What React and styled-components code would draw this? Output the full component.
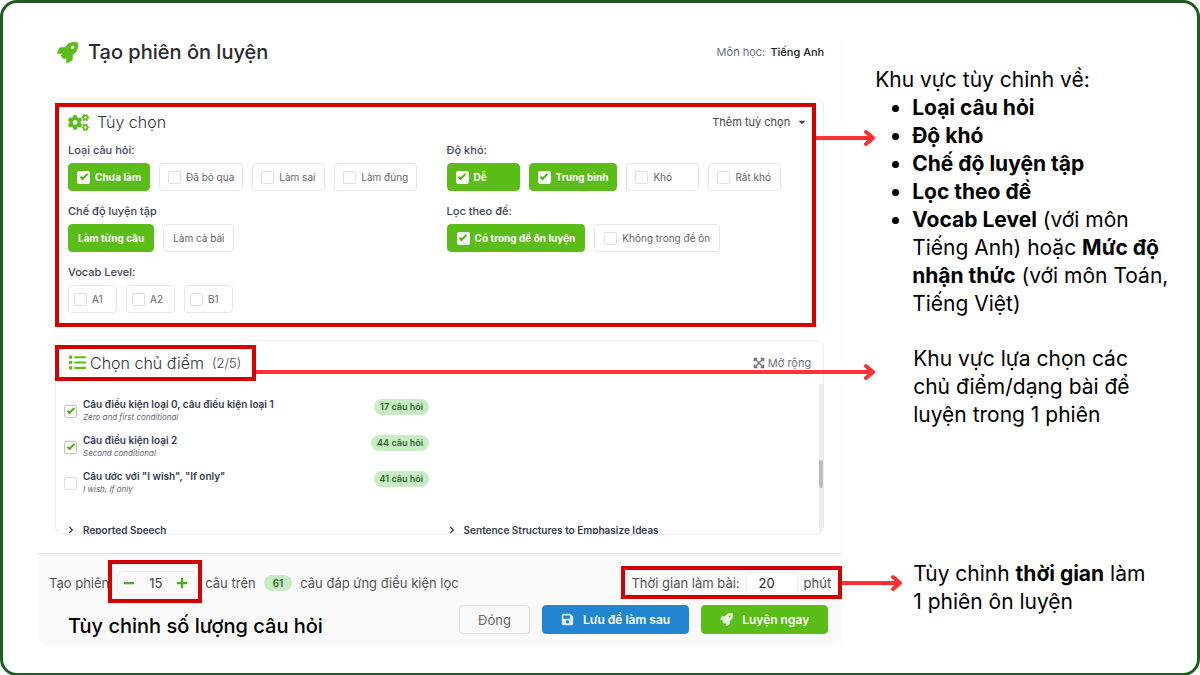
import React, { useState } from 'react';
import styled, { createGlobalStyle } from 'styled-components';
import {
  FaRocket,
  FaCogs,
  FaList,
  FaExpandArrowsAlt,
  FaSave,
  FaPlus,
  FaMinus,
  FaCaretDown,
  FaChevronRight,
} from 'react-icons/fa';

const QUESTION_TYPES = [
  { label: 'Chưa làm', on: true },
  { label: 'Đã bỏ qua' },
  { label: 'Làm sai' },
  { label: 'Làm đúng' },
];
const DIFFICULTIES = [
  { label: 'Dễ', on: true },
  { label: 'Trung bình', on: true },
  { label: 'Khó' },
  { label: 'Rất khó' },
];
const EXAM_FILTERS = [
  { label: 'Có trong đề ôn luyện', on: true },
  { label: 'Không trong đề ôn' },
];
const VOCAB_LEVELS = [{ label: 'A1' }, { label: 'A2' }, { label: 'B1' }];
const MODES = ['Làm từng câu', 'Làm cả bài'];

const TOPICS = [
  {
    title: 'Câu điều kiện loại 0, câu điều kiện loại 1',
    sub: 'Zero and first conditional',
    count: 17,
    on: true,
  },
  {
    title: 'Câu điều kiện loại 2',
    sub: 'Second conditional',
    count: 44,
    on: true,
  },
  {
    title: 'Câu ước với "I wish", "If only"',
    sub: 'I wish, If only',
    count: 41,
  },
];

function CheckChip({ label, on, size }) {
  const [checked, setChecked] = useState(!!on);
  return (
    <Chip $on={checked} $size={size}>
      <CheckBox
        type="checkbox"
        checked={checked}
        onChange={() => setChecked(!checked)}
      />
      <span>{label}</span>
    </Chip>
  );
}

function CheckGroup({ title, items, size }) {
  return (
    <Group>
      <legend>{title}</legend>
      <ChipRow>
        {items.map((item) => (
          <CheckChip key={item.label} size={size} {...item} />
        ))}
      </ChipRow>
    </Group>
  );
}

function Topic({ title, sub, count, on }) {
  const [checked, setChecked] = useState(!!on);
  return (
    <TopicRow>
      <CheckBox
        type="checkbox"
        $outlined
        checked={checked}
        onChange={() => setChecked(!checked)}
      />
      <TopicText>
        <strong>{title}</strong>
        <em>{sub}</em>
      </TopicText>
      <TopicBadge>{count} câu hỏi</TopicBadge>
    </TopicRow>
  );
}

function Arrow({ as: Place }) {
  return (
    <Place aria-hidden="true">
      <ArrowLine />
      <ArrowHead viewBox="0 0 12 18">
        <path d="M3 3 L10 9 L3 15" />
      </ArrowHead>
    </Place>
  );
}

export default function App() {
  const [mode, setMode] = useState(MODES[0]);
  const [amount, setAmount] = useState(15);
  const [minutes, setMinutes] = useState(20);

  return (
    <>
      <GlobalStyle />
      <Frame>
        <Modal>
          <ModalHeader>
            <FaRocket />
            <h1>Tạo phiên ôn luyện</h1>
            <Subject>
              Môn học: <b>Tiếng Anh</b>
            </Subject>
          </ModalHeader>

          <OptionCard>
            <CardHead>
              <FaCogs size={21} />
              <CardTitle $gap="8px">Tùy chọn</CardTitle>
              <MoreButton type="button">
                Thêm tuỳ chọn <FaCaretDown size={10} />
              </MoreButton>
            </CardHead>
            <OptionGrid>
              <CheckGroup title="Loại câu hỏi:" items={QUESTION_TYPES} />
              <CheckGroup title="Độ khó:" items={DIFFICULTIES} />
              <Group>
                <legend>Chế độ luyện tập</legend>
                <ChipRow>
                  {MODES.map((name) => (
                    <ModeButton
                      key={name}
                      type="button"
                      $on={mode === name}
                      onClick={() => setMode(name)}
                    >
                      {name}
                    </ModeButton>
                  ))}
                </ChipRow>
              </Group>
              <CheckGroup
                title="Lọc theo đề:"
                items={EXAM_FILTERS}
                size="wide"
              />
              <CheckGroup
                title="Vocab Level:"
                items={VOCAB_LEVELS}
                size="small"
              />
            </OptionGrid>
            <OptionMark />
            <Arrow as={OptionArrow} />
          </OptionCard>

          <TopicCard>
            <TopicHead>
              <FaList size={17} />
              <CardTitle $gap="4px">Chọn chủ điểm</CardTitle>
              <TopicCount>(2/5)</TopicCount>
              <ExpandButton type="button">
                <FaExpandArrowsAlt size={12} /> Mở rộng
              </ExpandButton>
            </TopicHead>
            <TopicBody>
              {TOPICS.map((topic) => (
                <Topic key={topic.title} {...topic} />
              ))}
              <SectionRow>
                <SectionButton type="button">
                  <FaChevronRight size={8} /> Reported Speech
                </SectionButton>
                <SectionButton type="button">
                  <FaChevronRight size={8} /> Sentence Structures to Emphasize
                  Ideas
                </SectionButton>
              </SectionRow>
              <ScrollTrack>
                <ScrollThumb />
              </ScrollTrack>
            </TopicBody>
            <TopicMark />
            <Arrow as={TopicArrow} />
          </TopicCard>

          <Footer>
            <FooterRow>
              <span>Tạo phiên</span>
              <Stepper>
                <button
                  type="button"
                  aria-label="Giảm"
                  onClick={() => setAmount(amount - 1)}
                >
                  <FaMinus size={12} />
                </button>
                <input
                  aria-label="Số câu"
                  value={amount}
                  onChange={(e) => setAmount(Number(e.target.value) || 0)}
                />
                <button
                  type="button"
                  aria-label="Tăng"
                  onClick={() => setAmount(amount + 1)}
                >
                  <FaPlus size={12} />
                </button>
                <StepperMark />
              </Stepper>
              <span>câu trên</span>
              <Badge $wide>61</Badge>
              <span>câu đáp ứng điều kiện lọc</span>
              <TimeBox>
                <label htmlFor="minutes">Thời gian làm bài:</label>
                <input
                  id="minutes"
                  value={minutes}
                  onChange={(e) => setMinutes(e.target.value)}
                />
                <span>phút</span>
                <TimeMark />
                <Arrow as={TimeArrow} />
              </TimeBox>
            </FooterRow>
            <ActionRow>
              <Caption>Tùy chỉnh số lượng câu hỏi</Caption>
              <ActionButton type="button">Đóng</ActionButton>
              <ActionButton type="button" $color="#2185d0">
                <FaSave size={13} /> Lưu để làm sau
              </ActionButton>
              <ActionButton type="button" $color="#5bbd17">
                <FaRocket size={13} /> Luyện ngay
              </ActionButton>
            </ActionRow>
          </Footer>
        </Modal>

        <Notes>
          <NoteIntro>
            <p>Khu vực tùy chỉnh về:</p>
            <ul>
              <li>
                <b>Loại câu hỏi</b>
              </li>
              <li>
                <b>Độ khó</b>
              </li>
              <li>
                <b>Chế độ luyện tập</b>
              </li>
              <li>
                <b>Lọc theo đề</b>
              </li>
              <li>
                <b>Vocab Level</b> (với môn Tiếng Anh) hoặc{' '}
                <b>Mức độ nhận thức</b> (với môn Toán, Tiếng Việt)
              </li>
            </ul>
          </NoteIntro>
          <TopicNote>
            Khu vực lựa chọn các chủ điểm/dạng bài để luyện trong 1 phiên
          </TopicNote>
          <TimeNote>
            Tùy chỉnh <b>thời gian</b> làm
            <br />1 phiên ôn luyện
          </TimeNote>
        </Notes>
      </Frame>
    </>
  );
}

const GlobalStyle = createGlobalStyle`
  * {
    box-sizing: border-box;
  }
  body {
    margin: 0;
    background: #ffffff;
    color: #000000;
    font-family: Inter, 'Noto Sans', sans-serif;
  }
  h1, h2, p, ul, fieldset {
    margin: 0;
    padding: 0;
    border: none;
  }
  button, input {
    font-family: inherit;
  }
  button {
    cursor: pointer;
  }
`;

const Frame = styled.main`
  min-height: 100vh;
  display: grid;
  grid-template-columns: 68fr 30fr;
  align-items: start;
  padding: 35px 0 27px 35px;
  border: 3px solid #1b5e20;
  border-radius: 17px;
`;

const Modal = styled.section`
  border-right: 1px solid #fafafa;
`;

const ModalHeader = styled.header`
  display: flex;
  align-items: center;
  height: 28px;
  margin: 0 17px 32px;
  padding-left: 2px;
  & > svg {
    width: 21px;
    height: 21px;
    color: #5bbd17;
  }
  & > h1 {
    margin-left: 10px;
    font-size: 20px;
    font-weight: 500;
    color: #2b2b2b;
  }
`;

const Subject = styled.span`
  margin-left: auto;
  font-size: 11px;
  color: #6b7280;
  & > b {
    margin-left: 2px;
    font-weight: 500;
    color: #222222;
  }
`;

const Card = styled.section`
  position: relative;
  margin: 0 17px;
  border: 1px solid #eeeeee;
  border-radius: 8px;
`;

const OptionCard = styled(Card)`
  padding: 13px 12px;
  margin-bottom: 13px;
`;

const CardHead = styled.div`
  display: flex;
  align-items: center;
  height: 20px;
  & > svg {
    color: #5bbd17;
  }
`;

const CardTitle = styled.h2`
  margin-left: ${(props) => props.$gap};
  font-size: 16px;
  font-weight: 300;
  color: #333333;
`;

const MoreButton = styled.button`
  display: flex;
  align-items: center;
  gap: 7px;
  margin-left: auto;
  padding: 0 4px 0 0;
  border: none;
  background: none;
  font-size: 11px;
  color: #444444;
`;

const OptionGrid = styled.div`
  display: grid;
  grid-template-columns: 1fr 1fr;
  gap: 12px 14px;
  margin-top: 10px;
`;

const Group = styled.fieldset`
  min-width: 0;
  & > legend {
    padding: 0;
    margin-bottom: 5px;
    font-size: 11px;
    line-height: 16px;
    font-weight: 500;
    color: #3f4657;
  }
`;

const ChipRow = styled.div`
  display: flex;
  gap: 9px;
`;

const CHIP_PADDING = { small: '5px', wide: '9px' };

const Chip = styled.label`
  display: flex;
  align-items: center;
  gap: 5px;
  height: 28px;
  min-width: ${(props) => (props.$size === 'small' ? '49px' : '73px')};
  padding: 0 ${(props) => CHIP_PADDING[props.$size] || '8px'};
  border: 1px solid ${(props) => (props.$on ? '#5bbd17' : '#e6e6e6')};
  border-radius: 4px;
  background-color: ${(props) => (props.$on ? '#5bbd17' : '#ffffff')};
  color: ${(props) => (props.$on ? '#ffffff' : '#666666')};
  font-size: 10px;
  font-weight: ${(props) => (props.$on ? 700 : 400)};
  white-space: nowrap;
  cursor: pointer;
`;

const CheckBox = styled.input`
  appearance: none;
  flex: none;
  display: grid;
  place-items: center;
  width: 13px;
  height: 13px;
  margin: 0;
  border: 1px solid #e0e0e0;
  border-radius: 2px;
  background: #ffffff;
  &:checked {
    border-color: ${(props) => (props.$outlined ? '#c4c4c4' : '#ffffff')};
  }
  &:checked::before {
    content: '';
    width: 6px;
    height: 2px;
    margin-bottom: 2px;
    border-left: 2px solid #4caf10;
    border-bottom: 2px solid #4caf10;
    transform: rotate(-45deg);
  }
`;

const ModeButton = styled.button`
  height: 28px;
  padding: 0 9px;
  border: 1px solid ${(props) => (props.$on ? '#5bbd17' : '#e6e6e6')};
  border-radius: 4px;
  background-color: ${(props) => (props.$on ? '#5bbd17' : '#ffffff')};
  color: ${(props) => (props.$on ? '#ffffff' : '#666666')};
  font-size: 10px;
  font-weight: ${(props) => (props.$on ? 700 : 400)};
`;

const TopicCard = styled(Card)`
  margin-bottom: 18px;
`;

const TopicHead = styled(CardHead)`
  height: 43px;
  padding: 0 12px 0 13px;
`;

const TopicCount = styled.span`
  margin-left: 8px;
  font-size: 13px;
  font-weight: 300;
  color: #444444;
`;

const ExpandButton = styled.button`
  display: flex;
  align-items: center;
  gap: 3px;
  margin-left: auto;
  padding: 0;
  border: none;
  background: none;
  font-size: 11px;
  color: #6b7280;
`;

const TopicBody = styled.div`
  position: relative;
  height: 150px;
  padding: 13px 8px 0;
  overflow: hidden;
  border-radius: 0 0 8px 8px;
`;

const TopicRow = styled.label`
  display: flex;
  align-items: center;
  gap: 6px;
  width: 365px;
  height: 28px;
  margin-bottom: 8px;
  cursor: pointer;
`;

const TopicText = styled.span`
  display: flex;
  flex: 1;
  flex-direction: column;
  line-height: 13px;
  color: #333b4d;
  & > strong {
    font-size: 10px;
    font-weight: 600;
  }
  & > em {
    font-size: 8px;
    color: #5f6675;
  }
`;

const Badge = styled.span`
  padding: 0 ${(props) => (props.$wide ? '9px' : '6px')};
  border-radius: 8px;
  background-color: #c8edc4;
  color: #2c662d;
  font-size: ${(props) => (props.$wide ? '10px' : '9px')};
  font-weight: 600;
  line-height: 16px;
`;

const TopicBadge = styled(Badge)`
  align-self: flex-start;
  margin-top: 2px;
`;

const SectionRow = styled.div`
  display: grid;
  grid-template-columns: 1fr 1fr;
  column-gap: 10px;
  margin-top: 25px;
`;

const SectionButton = styled.button`
  display: flex;
  align-items: center;
  gap: 8px;
  padding: 0 3px;
  border: none;
  background: none;
  font-size: 10px;
  font-weight: 600;
  line-height: 16px;
  color: #333b4d;
`;

const ScrollTrack = styled.div`
  position: absolute;
  top: 0;
  right: 0;
  bottom: 0;
  width: 4px;
  background-color: #eeeeee;
`;

const ScrollThumb = styled.div`
  height: 28px;
  margin-top: 76px;
  border-radius: 2px;
  background-color: #bdbdbd;
`;

const Footer = styled.footer`
  padding: 17px 10px 12px 11px;
  border-top: 1px solid #e0e0e0;
  border-radius: 0 0 12px 12px;
  background-color: #fafafa;
`;

const FooterRow = styled.div`
  display: flex;
  align-items: center;
  gap: 8px;
  height: 24px;
  font-size: 13px;
  color: #555555;
  white-space: nowrap;
`;

const Stepper = styled.div`
  position: relative;
  display: flex;
  align-items: center;
  width: 80px;
  height: 24px;
  border: 1px solid #eeeeee;
  border-radius: 6px;
  & > button {
    display: flex;
    flex: none;
    padding: 0 5px;
    border: none;
    background: none;
    color: #4caf10;
  }
  & > button:last-of-type {
    padding-right: 8px;
  }
  & > input {
    width: 100%;
    min-width: 0;
    padding: 0;
    border: none;
    background: none;
    text-align: center;
    font-size: 13px;
    color: #444444;
  }
`;

const TimeBox = styled.div`
  position: relative;
  display: flex;
  align-items: center;
  gap: 6px;
  margin-left: auto;
  & > input {
    width: 52px;
    height: 22px;
    padding: 0 12px;
    border: 1px solid #eeeeee;
    border-radius: 5px;
    background: #ffffff;
    font-size: 13px;
    color: #222222;
  }
`;

const ActionRow = styled.div`
  display: flex;
  align-items: flex-end;
  gap: 12px;
  margin-top: 10px;
  padding: 0 3px 0 19px;
`;

const Caption = styled.p`
  margin-right: auto;
  font-size: 20px;
  font-weight: 500;
  line-height: 16px;
`;

const ActionButton = styled.button`
  display: flex;
  align-items: center;
  gap: 9px;
  height: 29px;
  padding: 0 18px;
  border: 1px solid ${(props) => props.$color || '#e0e0e0'};
  border-radius: 4px;
  background-color: ${(props) => props.$color || '#fafafa'};
  color: ${(props) => (props.$color ? '#ffffff' : '#666666')};
  font-size: ${(props) => (props.$color ? '12px' : '13px')};
  font-weight: ${(props) => (props.$color ? 600 : 400)};
  white-space: nowrap;
  & > svg {
    opacity: 0.85;
  }
`;

// red marks that lie over the form
const Mark = styled.div`
  position: absolute;
  z-index: 1;
  border: 4px solid #d50000;
  pointer-events: none;
`;

const OptionMark = styled(Mark)`
  top: 4px;
  right: 7px;
  bottom: -1px;
  left: -1px;
`;

const TopicMark = styled(Mark)`
  top: 4px;
  left: -1px;
  width: 201px;
  height: 36px;
`;

const StepperMark = styled(Mark)`
  inset: -12px -6px -9px -10px;
`;

const TimeMark = styled(Mark)`
  inset: -6px -11px -5px -10px;
`;

const ArrowPlace = styled.div`
  position: absolute;
  z-index: 1;
  display: flex;
  align-items: center;
  height: 18px;
  pointer-events: none;
`;

const OptionArrow = styled(ArrowPlace)`
  top: 30px;
  right: -52px;
  width: 59px;
`;

const TopicArrow = styled(ArrowPlace)`
  top: 22px;
  right: -52px;
  left: 200px;
`;

const TimeArrow = styled(ArrowPlace)`
  left: calc(100% + 11px);
  width: 60px;
`;

const ArrowLine = styled.span`
  flex: 1;
  height: 4px;
  margin-right: -10px;
  background-color: #ff3131;
`;

const ArrowHead = styled.svg`
  width: 12px;
  height: 18px;
  fill: none;
  stroke: #ff3131;
  stroke-width: 4;
  stroke-linecap: round;
  stroke-linejoin: round;
`;

const Notes = styled.aside`
  padding: 28px 24px 0 33px;
  font-size: 21px;
  line-height: 28px;
`;

const NoteIntro = styled.div`
  & > ul {
    padding-left: 37px;
  }
`;

const TopicNote = styled.p`
  margin-top: 27px;
  padding: 0 16px 0 38px;
`;

const TimeNote = styled.p`
  margin-top: 131px;
  padding-left: 38px;
`;
